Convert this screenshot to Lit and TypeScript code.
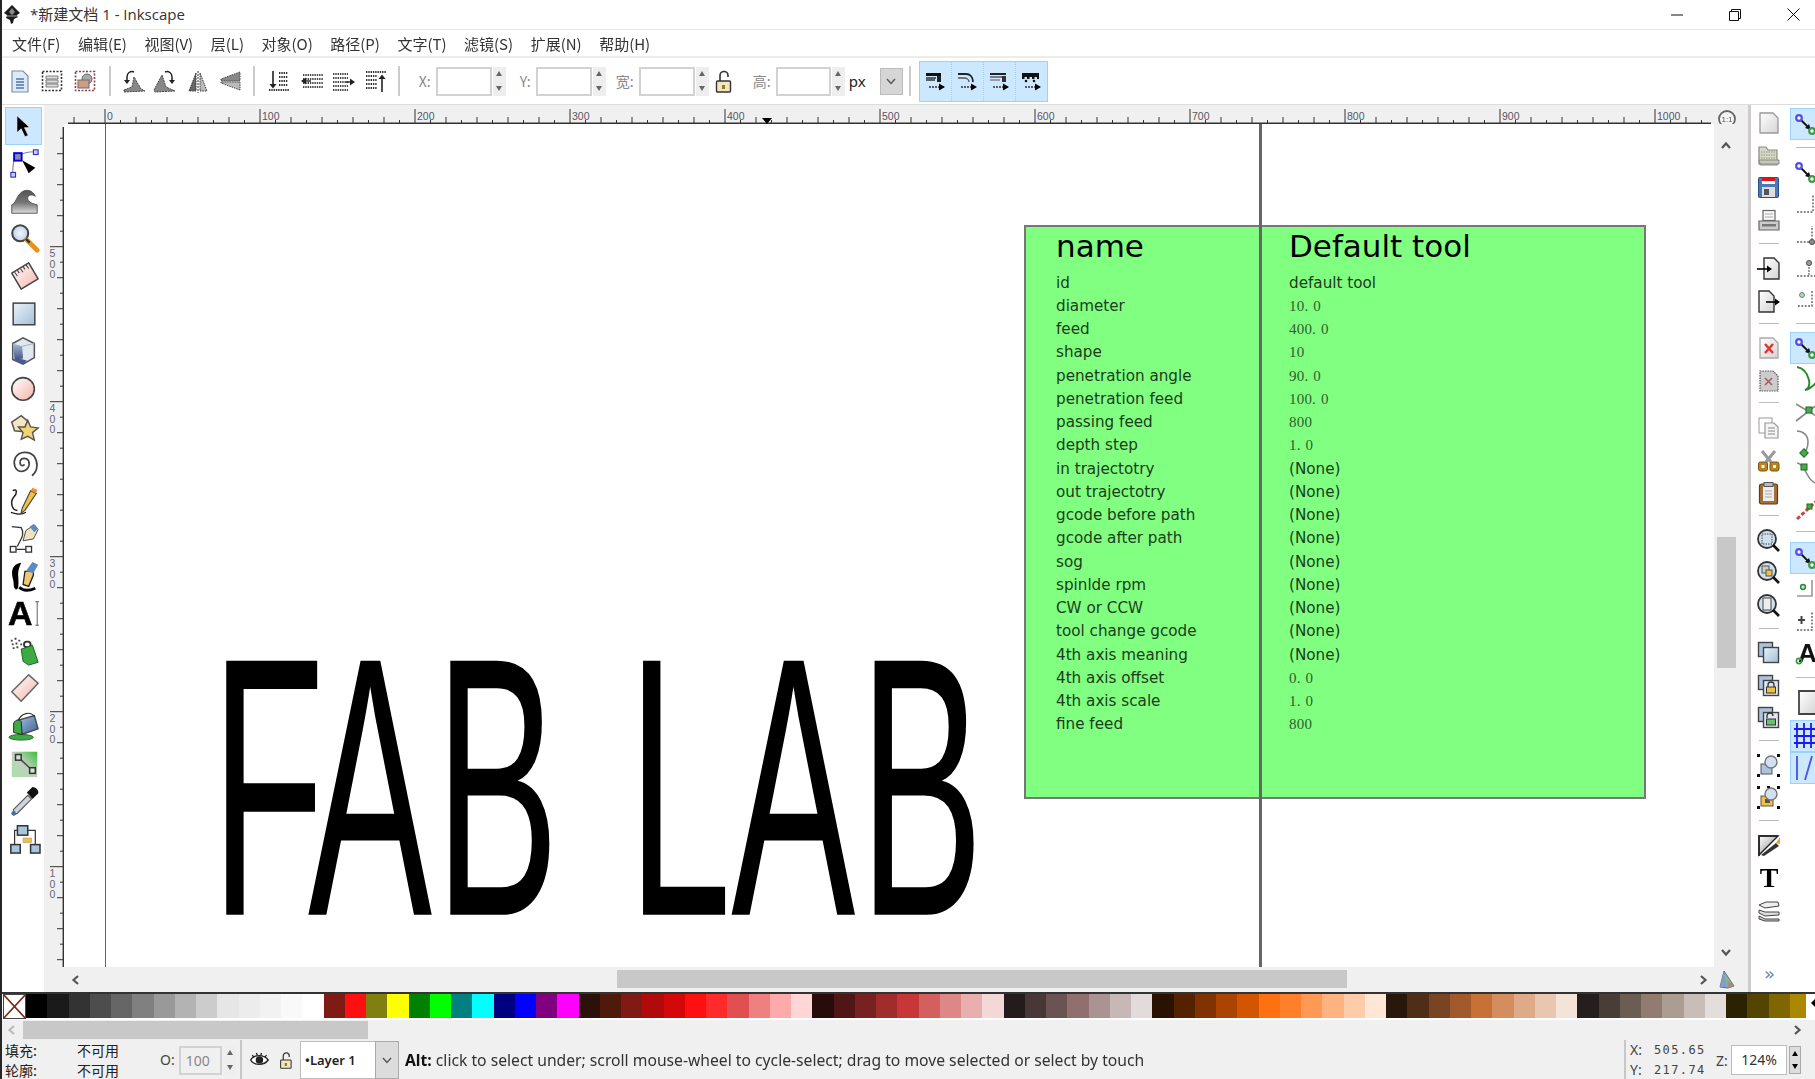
import { LitElement, html, css, svg } from "lit";
import { customElement } from "lit/decorators.js";

const chev = (d: string, c = "#555", sw = 2.2) => html`<svg class="chev" width="12" height="12" viewBox="0 0 12 12"><path d=${d} fill="none" stroke=${c} stroke-width=${sw}/></svg>`;
const CL = "M8 2L3.5 6L8 10", CR = "M4 2L8.5 6L4 10", CU = "M2 8L6 3.5L10 8", CD = "M2 4L6 8.5L10 4";

const dots = (x: number, y: number, w: number, c = "#333") => svg`<path d="M${x} ${y}h${w}" stroke=${c} stroke-width="2" stroke-dasharray="1.4 .9" fill="none"/>`;

const node = (x: number, y: number, c: string, s = 2.2) => svg`<circle cx=${x} cy=${y} r="2.8" fill="#fff" stroke=${c} stroke-width=${s}/>`;
const snapNode = svg`<path d="M10 11L19 20" stroke="#111" stroke-width="1.8"/><path d="M21 22l-6-2 4-4z" fill="#111"/>${node(9, 10, "#5050e8")}${node(22, 23, "#3d9a4a")}`;

const TOOLS: Record<string, any> = {
  select: svg`<path d="M9.5 6L9.5 24L14 20L18 28.5L21.5 27L17.5 18.8L23 18.5Z" fill="#000" stroke="#fff" stroke-width=".6"/>`,
  node: svg`<path d="M11 10C16 5 24 5 29 5M7 12C5 18 5 24 5 29" stroke="#888" stroke-width="1.2" fill="none"/><rect x="6.5" y="6.5" width="8" height="8" fill="#88a" stroke="#00d" stroke-width="2"/><rect x="27" y="3" width="5" height="5" fill="#cce" stroke="#33c" stroke-width="1.2"/><rect x="3" y="27" width="5" height="5" fill="#cce" stroke="#33c" stroke-width="1.2"/><path d="M15 14L29 22L22 28Z" fill="#000"/>`,
  tweak: svg`<path d="M4 30V21C8 20 9 12 14 8C19 4 26 5 29 12C25 9 20 11 21 15C22 19 27 20 31 21V30Z" fill="url(#gTweak)" stroke="#555" stroke-width="1"/>`,
  zoom: svg`<circle cx="13" cy="12" r="8.5" fill="url(#gBlue)" stroke="#444" stroke-width="2.2"/><path d="M20 19L31 30" stroke="#e8921c" stroke-width="5" stroke-linecap="round"/><path d="M19 18L23 22" stroke="#333" stroke-width="2.5"/>`,
  measure: svg`<path d="M4 14L22 3L32 20L14 31Z" fill="url(#gPink)" stroke="#444" stroke-width="1.6" stroke-linejoin="round"/><path d="M7 13l3 4M10 11l2 3M13 9l3 4M16 7l2 3M19 5l3 4" stroke="#444" stroke-width="1.2"/>`,
  rect: svg`<rect x="5.5" y="6.5" width="23" height="23" fill="url(#gRect)" stroke="#444" stroke-width="1.6"/>`,
  cube: svg`<path d="M5 9L16 3L28 9V24L16 31L5 26Z" fill="#dfe8f0" stroke="#555" stroke-width="1.6"/><path d="M5 9L15 12L16 25L7 26Z" fill="url(#gBlue2)"/><path d="M15 12L28 9" stroke="#aaa"/><path d="M8 24L20 27L16 31L6 27Z" fill="#4b5a90"/>`,
  circle: svg`<circle cx="16" cy="18" r="12" fill="url(#gPink)" stroke="#444" stroke-width="1.7"/>`,
  star: svg`<path d="M4 13L14 6L21 12L16 23L7 22Z" fill="#f4e6c0" stroke="#555" stroke-width="1.6"/><path d="M21 11L24 18L32 19L26 24L28 32L21 28L14 31L16 24L11 18L18 18Z" fill="#f0d670" stroke="#555" stroke-width="1.5"/>`,
  spiral: svg`<path d="M17 19C15 21 12 19 13 15C14 11 20 11 22 15C24 20 20 26 14 26C7 25 5 17 8 11C12 4 23 4 28 10C32 16 32 25 26 30" fill="none" stroke="#444" stroke-width="1.8" stroke-linecap="round"/>`,
  pencil: svg`<path d="M5 6C10 3 10 9 6 13C2 18 4 27 10 27" fill="none" stroke="#222" stroke-width="1.6"/><path d="M18 27L14 30L15 25L24 6L30 9Z" fill="#f0c24a" stroke="#444" stroke-width="1.2"/><path d="M24 6L26 3L31 5L30 9Z" fill="#e8903a"/><path d="M3 29C10 31 14 32 19 29" fill="none" stroke="#222" stroke-width="1.4"/>`,
  pen: svg`<rect x="2.5" y="26" width="6" height="6" fill="#fff" stroke="#333" stroke-width="1.4"/><rect x="19" y="26" width="6" height="6" fill="#fff" stroke="#333" stroke-width="1.4"/><path d="M9 29H19M4 5L14 6C19 14 12 20 10 26" fill="none" stroke="#333" stroke-width="1.4"/><path d="M16 20L19 9L28 3L32 8L27 18Z" fill="#f0e2c0" stroke="#444" stroke-width="1"/><path d="M23 5L27 2L32 7L28 11Z" fill="#5d88c8"/>`,
  callig: svg`<path d="M14 3C5 4 3 12 5 19C7 26 5 28 8 31C12 33 11 24 11 19C10 12 12 8 14 3Z" fill="#000"/><path d="M12 29C16 33 22 33 29 30" stroke="#000" stroke-width="3" fill="none"/><path d="M16 26L18 12L27 12L27 16L22 28Z" fill="#f0c870" stroke="#222" stroke-width="1.4"/><path d="M19 12L26 2L32 5L27 14Z" fill="#5d88c8"/>`,
  text: svg`<text x="0" y="30" font-family="Liberation Sans" font-weight="700" font-size="36" fill="#000" stroke="#000" stroke-width=".6">A</text><path d="M29 5h4M31 5V30M29 30h4" stroke="#555" stroke-width="1" fill="none"/>`,
  spray: svg`<path d="M3 6h2M7 4h2M4 10h2M8 9h2M11 6h2M13 10h2M5 14h2M9 13h2" stroke="#444" stroke-width="2"/><rect x="17" y="7" width="7" height="6" rx="3" fill="none" stroke="#333" stroke-width="2"/><path d="M14 15L26 11L32 29L22 32L16 28Z" fill="#3eab42" stroke="#1c5c1f" stroke-width="1"/>`,
  eraser: svg`<path d="M4 21L22 3L32 12L14 31Z" fill="url(#gPink)" stroke="#666" stroke-width="1.6" stroke-linejoin="round"/>`,
  bucket: svg`<ellipse cx="14" cy="29" rx="13" ry="3" fill="#3eab42" stroke="#1d6a22"/><path d="M10 11L28 6L32 20L15 26Z" fill="url(#gBlue3)" stroke="#444" stroke-width="1.4"/><path d="M6 24V14C8 10 12 10 14 12L15 26Z" fill="#3eab42" stroke="#222"/><path d="M11 11C14 3 24 1 28 7" fill="none" stroke="#333" stroke-width="1.3"/>`,
  gradient: svg`<rect x="4" y="5" width="27" height="27" fill="url(#gGreen)"/><path d="M11 11L26 25" stroke="#444" stroke-width="1.6"/><rect x="8" y="8" width="6" height="6" fill="#ddd" stroke="#333" stroke-width="1.6"/><rect x="23" y="22" width="6" height="6" fill="#ddd" stroke="#333" stroke-width="1.6"/>`,
  dropper: svg`<path d="M6 26L21 11L25 15L10 30L6 32Z" fill="#cbd5e0" stroke="#555" stroke-width="1.2"/><path d="M20 8L26 2C30 2 33 6 32 9L26 15Z" fill="#111"/><circle cx="6" cy="30" r="2.4" fill="#4a6da0"/>`,
  conn: svg`<rect x="10" y="4" width="11" height="10" fill="#a9c4de" stroke="#333" stroke-width="1.6"/><rect x="3" y="24" width="10" height="9" fill="#a9c4de" stroke="#333" stroke-width="1.6"/><rect x="24" y="24" width="10" height="9" fill="#a9c4de" stroke="#333" stroke-width="1.6"/><rect x="16" y="17" width="9" height="5" fill="#f0c040" stroke="#999" stroke-width=".6"/><path d="M10 9H7V24M21 9H29V24" fill="none" stroke="#333" stroke-width="1.3"/>`,
};

const TB: Record<string, any> = {
  doc: svg`<path d="M4 2h11l5 5v16H4z" fill="#dfeaf5" stroke="#7d90a8" stroke-width="1.2"/><path d="M8 10h8M8 13h8M8 16h8M8 19h8" stroke="#4a78b0" stroke-width="1.5"/>`,
  selAll: svg`<rect x="2.5" y="2.5" width="19" height="19" fill="none" stroke="#333" stroke-width="1.6" stroke-dasharray="2 1.5"/><path d="M6 7h12v3H6zM6 11h12v3H6zM6 15h12v3H6z" fill="#ddd" stroke="#666" stroke-width=".8"/>`,
  selLay: svg`<rect x="2.5" y="2.5" width="19" height="19" fill="none" stroke="#844" stroke-width="1.6" stroke-dasharray="2 1.5"/><circle cx="14" cy="10" r="5" fill="#aaa" stroke="#666"/><rect x="5" y="11" width="11" height="8" fill="#c9a087" stroke="#766"/>`,
  rotL: svg`<path d="M3 21L11 18L13 8L20 20L24 22L3 23Z" fill="#888" stroke="#444" stroke-dasharray="2 .8"/><path d="M13 3A5 5 0 0 0 6 8V13" fill="none" stroke="#222" stroke-width="1.5"/><path d="M3 11h6l-3 4z" fill="#222"/>`,
  rotR: svg`<path d="M1 21L9 6L13 18L22 22L2 23Z" fill="#888" stroke="#444" stroke-dasharray="2 .8"/><path d="M12 3A5 5 0 0 1 19 8V13" fill="none" stroke="#222" stroke-width="1.5"/><path d="M16 11h6l-3 4z" fill="#222"/>`,
  flipH: svg`<path d="M10 4L3 22H10Z" fill="#666" stroke="#333" stroke-dasharray="1.5 1"/><path d="M14 4L21 22H14Z" fill="#bbb" stroke="#333" stroke-dasharray="1.5 1"/><path d="M12 2V24" stroke="#333" stroke-dasharray="2 1"/>`,
  flipV: svg`<path d="M22 3L3 10V12H22Z" fill="#888" stroke="#444" stroke-dasharray="1.5 1"/><path d="M22 21L3 14V13H22Z" fill="#bbb" stroke="#444" stroke-dasharray="1.5 1"/>`,
  top: svg`${[4, 8, 12, 16].map((y) => dots(12, y, 9))}${dots(2, 21, 20)}<path d="M6 2V17" stroke="#222" stroke-width="1.6"/><path d="M2.5 15h7l-3.5 4.5z" fill="#222"/>`,
  up: svg`${[6, 10, 14, 18].map((y) => dots(3, y, 20, "#444"))}<path d="M2 12h9" stroke="#222" stroke-width="1.4"/><path d="M1 12l5-3.5v7z" fill="#222"/>`,
  down: svg`${[5, 9, 13, 17, 21].map((y) => dots(1, y, 15, "#444"))}<path d="M14 13h8" stroke="#222" stroke-width="1.4"/><path d="M23 13l-5-3.5v7z" fill="#222"/>`,
  bot: svg`${dots(2, 3, 20)}${[7, 11, 15, 19].map((y) => dots(2, y, 11))}<path d="M18 8V23" stroke="#222" stroke-width="1.6"/><path d="M14.5 10h7L18 5.5z" fill="#222"/>`,
  s1: svg`<path d="M3 4h15v3H3z" fill="#111"/><path d="M3 9h10M3 11h9" stroke="#333" stroke-width="1.4"/><path d="M14 7h4v6h-4z" fill="#222"/><path d="M6 18h11" stroke="#333" stroke-width="1.5" stroke-dasharray="2 1"/><path d="M22 18l-6-3.5v7z" fill="#000"/>`,
  s2: svg`<path d="M3 5H11C15 5 18 8 18 13" fill="none" stroke="#222" stroke-width="1.8"/><path d="M3 9H9C12 9 14 11 14 13" fill="none" stroke="#555" stroke-width="1.4"/><path d="M6 18h11" stroke="#333" stroke-width="1.5" stroke-dasharray="2 1"/><path d="M22 18l-6-3.5v7z" fill="#000"/>`,
  s3: svg`<path d="M3 4h16v2H3z" fill="#222"/><path d="M3 7h12v2H3z" fill="#778"/><path d="M3 10h10v2H3z" fill="#99a"/><path d="M15 7h4v6h-4z" fill="#333"/><path d="M6 18h11" stroke="#333" stroke-width="1.5" stroke-dasharray="2 1"/><path d="M22 18l-6-3.5v7z" fill="#000"/>`,
  s4: svg`<path d="M3 4h17v4H3z" fill="#111"/><path d="M3 9h17" stroke="#111" stroke-width="2" stroke-dasharray="2.5 2.5"/><circle cx="7" cy="12" r="1.3" fill="#111"/><circle cx="15" cy="12" r="1.3" fill="#111"/><path d="M6 18h11" stroke="#333" stroke-width="1.5" stroke-dasharray="2 1"/><path d="M22 18l-6-3.5v7z" fill="#000"/>`,
  lock: svg`<path d="M7 13V6.5a4 4 0 0 1 8 0V8" fill="none" stroke="#333" stroke-width="1.6"/><rect x="3.5" y="12" width="14" height="11" rx="1" fill="#f2e6c0" stroke="#333" stroke-width="1.4"/><rect x="9" y="16" width="3" height="4" fill="#9a7a20"/>`,
  eye: svg`<path d="M2 12C6 5 18 5 23 12C18 19 6 19 2 12Z" fill="#fff" stroke="#222" stroke-width="1.6"/><circle cx="12.5" cy="12" r="4.5" fill="#222"/><path d="M4 6l2 3M9 3.5l1 3M15 3.5l-1 3M21 6l-2 3" stroke="#222" stroke-width="1.6"/>`,
};

const CMD: Record<string, any> = {
  new: svg`<path d="M3 2h13l5 5v15H3z" fill="url(#gPage)" stroke="#999" stroke-width="1.3" stroke-linejoin="round"/>`,
  open: svg`<path d="M2 20V3h7l2 3h9v15H4z" fill="#d8d8c8" stroke="#888" stroke-width="1.2"/><path d="M4 8h16M4 11h16M4 14h16" stroke="#a8b090" stroke-width="1.5" stroke-dasharray="1.5 1"/><path d="M2 16H22V20H3Z" fill="#c8c8b8" stroke="#888"/>`,
  save: svg`<rect x="1.5" y="1.5" width="20" height="20" rx="1" fill="#4a78b8" stroke="#2b4f88"/><rect x="5" y="2" width="13" height="6" fill="#fff"/><rect x="5" y="2" width="13" height="3" fill="#d81818"/><rect x="5" y="11" width="13" height="10" fill="#ddd"/><rect x="7" y="13" width="5" height="6" fill="#555"/>`,
  print: svg`<rect x="6" y="1.5" width="12" height="10" fill="#f8f8f8" stroke="#666" stroke-width="1.2"/><path d="M8 5h8M8 8h8" stroke="#aaa"/><path d="M2 12H22V21H2Z" fill="#ccc" stroke="#666" stroke-width="1.2"/><rect x="5" y="15" width="14" height="2.5" fill="#777"/>`,
  imp: svg`<path d="M7 2h10l5 5v16H7z" fill="url(#gPage)" stroke="#333" stroke-width="1.4"/><path d="M0 13H13" stroke="#000" stroke-width="1.6"/><path d="M15 13l-5-3.5v7z" fill="#000"/>`,
  exp: svg`<path d="M2 2h10l5 5v16H2z" fill="url(#gPage)" stroke="#333" stroke-width="1.4"/><path d="M9 13H19" stroke="#000" stroke-width="1.6"/><path d="M23 13l-5-3.5v7z" fill="#000"/>`,
  rev: svg`<path d="M3 2h13l5 5v15H3z" fill="url(#gPage)" stroke="#aaa" stroke-width="1.3"/><path d="M8 8L16 17M16 8L8 17" stroke="#e83030" stroke-width="2.4"/>`,
  close: svg`<path d="M3 2h13l5 5v15H3z" fill="#ccc" stroke="#555" stroke-width="1.2" stroke-dasharray="1.5 1"/><path d="M8 9L15 16M15 9L8 16" stroke="#a06060" stroke-width="1.6"/>`,
  copy: svg`<rect x="2" y="2" width="13" height="15" fill="#fff" stroke="#aaa" stroke-width="1.2"/><path d="M8 7H17L21 11V22H8Z" fill="#f4f4f4" stroke="#999" stroke-width="1.2"/><path d="M11 12h7M11 15h7M11 18h7" stroke="#888"/>`,
  cut: svg`<path d="M5 2L14 13M18 2L9 13" stroke="#999" stroke-width="3"/><rect x="1.5" y="13" width="9" height="9" rx="2" fill="#b88420" stroke="#7a5510"/><rect x="13" y="13" width="9" height="9" rx="2" fill="#b88420" stroke="#7a5510"/><rect x="4.5" y="16" width="3" height="3" fill="#eee"/><rect x="16" y="16" width="3" height="3" fill="#eee"/>`,
  paste: svg`<rect x="2.5" y="3" width="18" height="20" rx="2" fill="#a56f3a" stroke="#5c3b17" stroke-width="1.2"/><rect x="6" y="5" width="11" height="15" fill="#eee"/><rect x="7" y="1.5" width="9" height="4" fill="#bbb" stroke="#555"/><path d="M8 10h7M8 13h7M8 16h7" stroke="#aaa"/>`,
  zoomS: svg`<circle cx="10" cy="10" r="9" fill="#cfe0ee" stroke="#333" stroke-width="1.8"/><rect x="5" y="5" width="10" height="10" fill="none" stroke="#444" stroke-dasharray="1.5 1"/><path d="M16 16L22 22" stroke="#111" stroke-width="2.6"/>`,
  zoomD: svg`<circle cx="10" cy="10" r="9" fill="#cfe0ee" stroke="#333" stroke-width="1.8"/><rect x="5" y="5" width="7" height="7" fill="#ccc" stroke="#555"/><rect x="9" y="9" width="6" height="6" fill="#f0c040" stroke="#555"/><path d="M16 16L22 22" stroke="#111" stroke-width="2.6"/>`,
  zoomP: svg`<circle cx="10" cy="10" r="9" fill="#cfe0ee" stroke="#333" stroke-width="1.8"/><rect x="6" y="4" width="8" height="12" fill="#eee" stroke="#444"/><path d="M16 16L22 22" stroke="#111" stroke-width="2.6"/>`,
  dup: svg`<rect x="1.5" y="1.5" width="14" height="14" fill="#a9c4de" stroke="#444" stroke-width="1.4"/><rect x="6.5" y="6.5" width="15" height="15" fill="url(#gRect)" stroke="#444" stroke-width="1.4"/>`,
  clone: svg`<rect x="1.5" y="1.5" width="14" height="14" fill="#a9c4de" stroke="#444" stroke-width="1.4"/><rect x="6.5" y="6.5" width="15" height="15" fill="#dfe8f0" stroke="#444" stroke-width="1.4"/><path d="M11 13V11a3 3 0 0 1 6 0v2" fill="none" stroke="#333" stroke-width="1.3"/><rect x="9.5" y="13" width="9" height="6" fill="#f0c040" stroke="#333"/>`,
  unlink: svg`<rect x="1.5" y="1.5" width="14" height="14" fill="#a9c4de" stroke="#444" stroke-width="1.4"/><rect x="6.5" y="6.5" width="15" height="15" fill="#dfe8f0" stroke="#444" stroke-width="1.4"/><path d="M10 12V10a3 3 0 0 1 6 0" fill="none" stroke="#333" stroke-width="1.3"/><rect x="9.5" y="13" width="9" height="6" fill="#6cc070" stroke="#333"/>`,
  group: svg`<rect x="4" y="10" width="11" height="10" fill="#a9c4de" stroke="#555"/><circle cx="14" cy="8" r="6" fill="#cfe0ee" stroke="#777" stroke-width="1.4"/><path d="M0 0h3v3H0zM20 0h3v3H20zM0 20h3v3H0zM20 20h3v3H20z" fill="#111"/>`,
  ungroup: svg`<rect x="4" y="10" width="12" height="10" fill="#f0c040" stroke="#555"/><rect x="8" y="13" width="5" height="4" fill="#555"/><circle cx="14" cy="8" r="6" fill="#cfe0ee" stroke="#777" stroke-width="1.4"/><path d="M0 0h3v3H0zM20 0h3v3H20zM0 20h3v3H0zM20 20h3v3H20zM10 0h3v2h-3z" fill="#111"/>`,
  xml: svg`<path d="M2 2H21L2 21Z" fill="url(#gXml)" stroke="#222" stroke-width="1.4"/><path d="M2 22V2H21" fill="none" stroke="#222" stroke-width="1.6"/><path d="M4 21L19 9L22 12L7 22Z" fill="#333"/><path d="M19 9L23 3L23 10Z" fill="#e8a020"/>`,
  text: svg`<text x="12" y="21" text-anchor="middle" font-family="Liberation Serif" font-weight="700" font-size="28" fill="#000">T</text>`,
  layers: svg`<path d="M2 6L9 3H21L22 7L8 9Z" fill="#eee" stroke="#444"/><path d="M2 11L8 13H22V16L8 17L2 14Z" fill="#ddd" stroke="#444"/><path d="M2 17L8 20H22V22H8L2 20Z" fill="#ccc" stroke="#444"/>`,
};

const dashCorner = (d: string, extra: any = "") => svg`<path d=${d} fill="none" stroke="#555" stroke-width="1.4" stroke-dasharray="1.8 1.6"/>${extra}`;
const SNAP: Record<string, any> = {
  main: snapNode,
  conn: snapNode,
  bbox: dashCorner("M7 24H23V6"),
  edge: dashCorner("M7 22H22V6", svg`<circle cx="22" cy="22" r="2.6" fill="#888" stroke="#555"/>`),
  edgeMid: dashCorner("M7 24H25", svg`<path d="M19 12V24" stroke="#777" stroke-width="1.4" stroke-dasharray="2 1"/><circle cx="19" cy="11" r="2.6" fill="#999" stroke="#555"/>`),
  center: dashCorner("M8 22H22V6", svg`<circle cx="12" cy="11" r="2.4" fill="#ccd" stroke="#4a8a4a"/>`),
  path: svg`<path d="M7 3C13 4 17 8 19 16C20 22 18 25 15 26C20 25 24 22 30 14" fill="none" stroke="#2a8a2a" stroke-width="1.9"/>`,
  inter: svg`<path d="M6 25L33 4M6 8L33 24" stroke="#888" stroke-width="1.6"/><rect x="16" y="11" width="6" height="6" fill="#4aaa4a" stroke="#1a6a1a"/>`,
  cusp: svg`<path d="M7 3C13 3 18 7 18 14C18 20 16 24 12 27" fill="none" stroke="#888" stroke-width="1.6"/><rect x="11" y="22" width="6" height="6" transform="rotate(45 14 25)" fill="#4aaa4a" stroke="#1a6a1a"/>`,
  smooth: svg`<path d="M7 3C11 3 14 8 17 14C20 20 24 25 32 24" fill="none" stroke="#888" stroke-width="1.6"/><rect x="11" y="4" width="6" height="6" fill="#4aaa4a" stroke="#1a6a1a"/>`,
  mid: svg`<path d="M7 27L32 4" stroke="#d84040" stroke-width="3" stroke-dasharray="4 2"/><rect x="17" y="12" width="5" height="5" fill="#4aaa4a" stroke="#1a6a1a"/>`,
  oth: snapNode,
  rot: svg`<path d="M7 22H22V6" fill="none" stroke="#999" stroke-width="1.6"/><circle cx="13" cy="13" r="2.4" fill="#cde" stroke="#2a8a2a" stroke-width="1.5"/>`,
  cross: svg`<path d="M8 14H15M11.5 10V18" stroke="#444" stroke-width="2"/><path d="M7 24H22V6" fill="none" stroke="#555" stroke-width="1.4" stroke-dasharray="1.8 1.6"/>`,
  txt: svg`<text x="8" y="24" font-family="Liberation Sans" font-weight="700" font-size="26" fill="#111">A</text><circle cx="9" cy="23" r="2.6" fill="none" stroke="#3a9a3a" stroke-width="1.6"/>`,
  page: svg`<path d="M9 3H26V26H9Z" fill="url(#gPage)" stroke="#444" stroke-width="1.8"/>`,
  grid: svg`<path d="M7 3V28M14 3V28M21 3V28M28 3V28M4 9H32M4 16H32M4 23H32" stroke="#1a1aee" stroke-width="1.8"/>`,
  guide: svg`<path d="M7 4V28M15 28L22 4M30 4V28" stroke="#4a5ae8" stroke-width="1.9"/>`,
};

const SWATCHES = ["#000000","#1a1a1a","#333333","#4d4d4d","#666666","#808080","#999999","#b3b3b3","#cccccc","#e6e6e6","#ececec","#f2f2f2","#f9f9f9","#ffffff","#801a14","#ff1010","#808010","#ffff00","#008000","#00ff00","#008080","#00ffff","#000080","#0000ff","#800080","#ff00ff","#2b1108","#501a0a","#801a14","#b00a0a","#d40808","#ff1010","#ff2a2a","#e05050","#f08080","#ffaaaa","#ffd5d5","#280b0b","#501616","#782121","#a02c2c","#c83737","#d35f5f","#de8787","#e9afaf","#f4d7d7","#241c1c","#483737","#6c5353","#916f6f","#ac9393","#c8b7b7","#e3dbdb","#2b1100","#552200","#803300","#aa4400","#d45500","#ff7010","#ff7f2a","#ff9955","#ffb380","#ffccaa","#ffe6d5","#28170b","#502d16","#784421","#a05a2c","#c87137","#d38d5f","#deaa87","#e9c6af","#f4e3d7","#241f1c","#483e37","#6c5d53","#917c6f","#ac9d93","#c8beb7","#e3dedb","#2b2200","#554400","#806600","#aa8800"];

const ROWS: [string, string, boolean][] = [
  ["id", "default tool", false],["diameter", "10. 0", true],["feed", "400. 0", true],["shape", "10", true],["penetration angle", "90. 0", true],["penetration feed", "100. 0", true],["passing feed", "800", true],["depth step", "1. 0", true],["in trajectotry", "(None)", false],["out trajectotry", "(None)", false],["gcode before path", "(None)", false],["gcode after path", "(None)", false],["sog", "(None)", false],["spinlde rpm", "(None)", false],["CW or CCW", "(None)", false],["tool change gcode", "(None)", false],["4th axis meaning", "(None)", false],["4th axis offset", "0. 0", true],["4th axis scale", "1. 0", true],["fine feed", "800", true],
];

@customElement("app-root")
export class AppRoot extends LitElement {
  static styles = css`
    :host { display: block; width: 1815px; height: 1079px; overflow: hidden; position: relative; background: #fff; font-family: "Noto Sans", "Noto Sans CJK SC", sans-serif; color: #222; }
    .stripe { position: absolute; left: 0; top: 0; width: 2px; height: 1079px; background: #262626; z-index: 5; }
    .title { height: 29px; border-bottom: 1px solid #e6e6e6; display: flex; align-items: center; padding-left: 3px; font-size: 15px; }
    .title .logo { width: 18px; height: 20px; margin-right: 9px; }
    .title .t { flex: 1; color: #333; font-family: "Open Sans", "Noto Sans CJK SC", sans-serif; margin-top: -2px; }
    .wc { display: flex; }
    .wc div { width: 58px; height: 29px; display: flex; align-items: center; justify-content: center; }
    .menu { height: 26px; display: flex; align-items: center; padding-left: 12px; gap: 17.5px; border-bottom: 2px solid #ececec; font-size: 15px; color: #333; font-family: "Noto Sans CJK SC", sans-serif; filter: blur(.25px); }
    .menu span { white-space: nowrap; }
    .toolbar { height: 46px; border-bottom: 1px solid #ddd; display: flex; align-items: center; padding-left: 4px; font-size: 13px; color: #888; }
    .tb { width: 32.3px; height: 46px; display: flex; align-items: center; justify-content: center; flex: none; }
    .tb svg, .ico svg { filter: blur(.35px); overflow: visible; display: block; }
    .sep { width: 2px; height: 30px; background: #ccc; flex: none; }
    .lbl { flex: none; text-align: right; padding-right: 5px; box-sizing: border-box; color: #888; font-family: "Noto Sans CJK SC", sans-serif; font-size: 14px; }
    .inp { flex: none; width: 56px; height: 29px; box-sizing: border-box; border: 2px solid #d2d2d2; background: #fff; }
    .spin { flex: none; width: 13px; height: 29px; background: #eee; display: flex; flex-direction: column; align-items: center; justify-content: space-around; margin-left: 1px; }
    .up { width: 0; height: 0; border: 3.5px solid transparent; border-top: 0; border-bottom: 5px solid #666; }
    .dn { width: 0; height: 0; border: 3.5px solid transparent; border-bottom: 0; border-top: 5px solid #666; }
    .px { flex: none; width: 34px; height: 27px; background: #fff; color: #222; font-size: 15px; padding-left: 3px; box-sizing: border-box; line-height: 26px; margin-left: 1px; }
    .drop { flex: none; width: 23px; height: 27px; background: #d6d6d6; border: 1px solid #bbb; box-sizing: border-box; display: flex; align-items: center; justify-content: center; }
    .group { display: flex; flex: none; height: 41px; background: #cce8ff; border: 1px solid #99d1ff; box-sizing: border-box; width: 129px; }
    .group div { flex: 1; display: flex; align-items: center; justify-content: center; border-right: 1px dotted #99d1ff; }
    .group div:last-child { border-right: 0; }
    .main { display: flex; height: 887px; }
    .tools { width: 44px; flex: none; display: flex; flex-direction: column; padding-top: 2px; box-sizing: border-box; background: #fff; align-items: center; }
    .tool { flex: none; width: 37px; height: 37.5px; display: flex; align-items: center; justify-content: center; box-sizing: border-box; margin-left: 3px; }
    .tool.on { background: #cce8ff; border: 1px solid #99d1ff; }
    .center { flex: 1; display: grid; grid-template-columns: 20px 1647px 37px; grid-template-rows: 19px 843px 25px; background: #f0f0f0; min-width: 0; }
    .rt, .rl { display: block; overflow: hidden; }
    .rt { grid-column: 1 / 3; grid-row: 1; }
    .rl { grid-column: 1; grid-row: 2; }
    .corner11 { grid-column: 3; grid-row: 1; display: flex; justify-content: center; align-items: flex-start; padding: 4px 1px 0 0; box-sizing: border-box; height: 19px; }
    .canvas { grid-column: 2; grid-row: 2; background: #fff; position: relative; }
    .pagel { position: absolute; left: 41px; top: 0; bottom: 0; width: 1px; background: #666; }
    .guide { position: absolute; left: 1195px; top: 0; bottom: 0; width: 3px; background: #666; z-index: 2; }
    .fab { position: absolute; left: 147px; top: 497px; display: flex; font-family: "Liberation Sans", sans-serif; font-size: 186px; line-height: .9; color: #000; transform: scaleY(1.985); transform-origin: left top; white-space: pre; font-kerning: none; }
    .fab span { display: block; height: 167px; }
    .fab .k0 { width: 97px; }
    .k2 { margin-left: 3px; }
    .k3 { margin-left: 17px; }
    .k4 { margin-left: 4px; }
    .sheet { position: absolute; left: 960px; top: 101px; width: 622px; height: 574px; box-sizing: border-box; background: #80ff80; border: 2px solid #777; padding-left: 30px; font-family: "DejaVu Sans", sans-serif; color: #111; display: grid; grid-template-columns: 233px 1fr; grid-template-rows: 44.5px; grid-auto-rows: 23.25px; align-content: start; z-index: 1; }
    .sheet .glive { position: absolute; left: 233px; top: -2px; bottom: -2px; width: 3px; background: #31a831; z-index: 3; }
    .hd { font-size: 31px; line-height: 31px; padding-top: 3.5px; color: #000; white-space: nowrap; }
    .cell { font-size: 15.2px; line-height: 23.25px; color: #1c3c1c; white-space: pre; }
    .num { font-family: "Liberation Serif", serif; font-size: 15px; color: #2f5f2f; word-spacing: 1px; letter-spacing: .2px; }
    .vs { grid-column: 3; grid-row: 2; display: flex; flex-direction: column; align-items: center; position: relative; border-left: 3px solid #fff; box-sizing: border-box; background: #f0f0f0; width: 37px; }
    .vthumb { position: absolute; left: 3px; top: 413px; width: 19px; height: 131px; background: #c8c8c8; }
    .vs .a { margin-top: 11px; margin-left: -10px; }
    .vs .b { margin-top: auto; margin-bottom: 4px; margin-left: -10px; }
    .hs { grid-column: 1 / 3; grid-row: 3; display: flex; align-items: center; position: relative; }
    .hthumb { position: absolute; left: 573px; top: 3px; width: 730px; height: 18px; background: #c8c8c8; }
    .hs .a { margin-left: 26px; }
    .hs .b { margin-left: auto; margin-right: 2px; }
    .cms { grid-column: 3; grid-row: 3; display: flex; align-items: center; padding-left: 7px; box-sizing: border-box; }
    .right { width: 67px; flex: none; border-left: 3px solid #d0cccc; box-sizing: border-box; display: flex; background: #fff; position: relative; overflow: hidden; }
    .cmd { width: 35px; flex: none; display: flex; flex-direction: column; align-items: center; padding-top: 1.7px; box-sizing: border-box; }
    .c { height: 32.6px; flex: none; display: flex; align-items: center; justify-content: center; }
    .csep { width: 20px; height: 1px; background: #bbb; flex: none; margin: 5.5px 0 8.27px; }
    .more { position: absolute; left: 13px; top: 860px; color: #6a86b8; font-size: 18px; line-height: 18px; font-family: "DejaVu Sans", sans-serif; }
    .snap { width: 32px; flex: none; display: flex; flex-direction: column; padding-top: 3px; overflow: hidden; margin-left: 4px; }
    .s { height: 32px; width: 32px; flex: none; display: flex; align-items: center; box-sizing: border-box; }
    .s.on { background: #cce8ff; border: 1px solid #99d1ff; border-right: 0; }
    .s.on svg { margin-left: -1px; }
    .ssep { height: 1px; width: 22px; margin: 7px 0 8px 6px; background: #bbb; flex: none; }
    .ssep.w { margin-bottom: 10px; }
    .palette { height: 28px; border-top: 2px solid #333; display: flex; background: #fff; box-sizing: border-box; position: relative; }
    .x { width: 23px; height: 25px; margin-left: 3px; flex: none; }
    .sw { flex: none; display: flex; width: 1779.5px; height: 24px; overflow: hidden; }
    .sw i { display: block; width: 21.25px; height: 24px; flex: none; }
    .pm { position: absolute; right: 0; top: 5px; width: 0; height: 0; border: 4px solid transparent; border-left: 0; border-right: 4px solid #000; }
    .pscroll { height: 20px; background: #f0f0f0; display: flex; align-items: center; position: relative; padding: 0 12px 0 6px; justify-content: space-between; }
    .pthumb { position: absolute; left: 23px; top: 1px; width: 345px; height: 18px; background: #c8c8c8; }
    .status { height: 40px; background: #f0f0f0; display: flex; align-items: center; font-size: 14px; color: #222; padding: 0 14px 0 5px; box-sizing: border-box; }
    .fs { width: 235px; flex: none; display: grid; grid-template-columns: 72px 60px 1fr; grid-template-rows: 20px 20px; font-family: "Noto Sans CJK SC", sans-serif; font-size: 14px; line-height: 20px; }
    .o { grid-column: 3; grid-row: 1 / 3; display: flex; align-items: center; color: #666; font-size: 14px; font-family: "Noto Sans", sans-serif; }
    .o b { font-weight: 400; margin-right: 4px; color: #444; margin-left: 23px; }
    .oi { width: 43px; height: 29px; border: 2px solid #d2d2d2; box-sizing: border-box; line-height: 25px; padding-left: 5px; color: #888; flex: none; }
    .status .spin { height: 29px; margin-left: 2px; width: 12px; }
    .vsep { width: 2px; height: 40px; background: #c8c8c8; flex: none; }
    .ly { flex: none; width: 75px; height: 38px; background: #fff; box-sizing: border-box; border: 1px solid #bbb; border-right: 0; line-height: 36px; padding-left: 4px; font-size: 13px; font-weight: 600; font-family: "Noto Sans", sans-serif; color: #222; }
    .ld { flex: none; width: 24px; height: 38px; background: #dcdcdc; border: 1px solid #aaa; box-sizing: border-box; display: flex; align-items: center; justify-content: center; }
    .msg { flex: 1; padding-left: 6px; white-space: nowrap; color: #333; font-family: "Noto Sans", sans-serif; font-size: 15.7px; min-width: 0; filter: blur(.2px); }
    .msg b { font-weight: 700; color: #111; }
    .coords { width: 90px; flex: none; display: grid; grid-template-columns: 24px 1fr; grid-template-rows: 20px 20px; padding-left: 4px; box-sizing: border-box; line-height: 20px; color: #444; }
    .coords span:nth-child(even) { font-family: "DejaVu Sans Mono", monospace; font-size: 12px; letter-spacing: 1.4px; }
    .coords span:nth-child(odd) { font-size: 14px; }
    .z { flex: none; font-size: 14px; width: 15px; color: #444; }
    .zi { flex: none; width: 56px; height: 30px; box-sizing: border-box; border: 1px solid #bbb; background: #fff; line-height: 28px; text-align: center; font-size: 14px; color: #333; }
    .zs { flex: none; width: 12px; height: 28px; margin-left: 2px; background: #ddd; border: 1px solid #aaa; box-sizing: border-box; display: flex; flex-direction: column; align-items: center; justify-content: space-around; }
    .zs .up { border-bottom-color: #000; }
    .zs .dn { border-top-color: #000; }
  `;

  private ic(frag: any, size = 24, vb = 24) {
    return html`<svg width=${size} height=${size} viewBox="0 0 ${vb} ${vb}">${frag}</svg>`;
  }

  private topRuler() {
    const origin = 44;
    const lines: any[] = [];
    for (let k = -2; k < 110; k++) {
      const x = 105 + k * 15.5 - origin;
      if (x < 24 || x > 1711 - origin) continue;
      const major = k % 10 === 0;
      const tall = ((k % 2) + 2) % 2 === 0;
      const y1 = major ? 4 : tall ? 12 : 15;
      lines.push(svg`<path d="M${x} ${y1}V19" stroke="#333" stroke-width="1"/>`);
      if (major && k >= 0) lines.push(svg`<text x=${x + 2} y="15" font-size="10.5" font-family="Liberation Sans" fill="#556">${k * 10}</text>`);
    }
    return svg`<svg class="rt" width="1667" height="19" viewBox="0 0 1667 19"><path d="M24 18.3H1667" stroke="#333" stroke-width="1.4"/>${lines}<path d="M718 13h10l-5 6z" fill="#000"/></svg>`;
  }

  private leftRuler() {
    const out: any[] = [];
    for (let k = -8; k < 48; k++) {
      const y = 246.7 + k * 15.5 - 124;
      if (y < 3 || y > 843) continue;
      const major = k % 10 === 0;
      const tall = ((k % 2) + 2) % 2 === 0;
      const x1 = major ? 6 : tall ? 13 : 16;
      out.push(svg`<path d="M${x1} ${y}H20" stroke="#333" stroke-width="1"/>`);
      if (major) {
        const v = String(500 - k * 10);
        [...v].forEach((ch, i) => out.push(svg`<text x="5.5" y=${y + 10.5 + i * 10.4} font-size="10.5" font-family="Liberation Sans" fill="#667">${ch}</text>`));
      }
    }
    return svg`<svg class="rl" width="20" height="843" viewBox="0 0 20 843"><path d="M19.3 3V843" stroke="#333" stroke-width="1.4"/>${out}</svg>`;
  }

  render() {
    const tb = (n: string) => html`<div class="tb ico">${this.ic(TB[n])}</div>`;
    const spin = html`<div class="spin"><i class="up"></i><i class="dn"></i></div>`;
    const tools = ["select","node","tweak","zoom","measure","rect","cube","circle","star","spiral","pencil","pen","callig","text","spray","eraser","bucket","gradient","dropper","conn"];
    const cmds = ["new","open","save","print","|","imp","exp","|","rev","close","|","copy","cut","paste","|","zoomS","zoomD","zoomP","|","dup","clone","unlink","|","group","ungroup","|","xml","text","layers"];
    const snaps: [string, boolean][] = [["main",true],["|",false],["conn",false],["bbox",false],["edge",false],["edgeMid",false],["center",false],["|",false],["main",true],["path",false],["inter",false],["cusp",false],["smooth",false],["mid",false],["w",false],["oth",true],["rot",false],["cross",false],["txt",false],["w",false],["page",false],["grid",true],["guide",true]];
    return html`
      <svg width="0" height="0" style="position:absolute">
        <defs>
          <linearGradient id="gPage" x1="0" y1="0" x2="1" y2="1"><stop offset="0" stop-color="#fff"/><stop offset="1" stop-color="#d4d4d4"/></linearGradient>
          <linearGradient id="gTweak" x1="0" y1="0" x2="0" y2="1"><stop offset="0" stop-color="#555"/><stop offset=".55" stop-color="#777"/><stop offset="1" stop-color="#ddd"/></linearGradient>
          <radialGradient id="gBlue"><stop offset="0" stop-color="#f0f6fb"/><stop offset="1" stop-color="#bcd4e8"/></radialGradient>
          <linearGradient id="gBlue2" x1="0" y1="0" x2="0" y2="1"><stop offset="0" stop-color="#a8bbd4"/><stop offset="1" stop-color="#44558a"/></linearGradient>
          <linearGradient id="gBlue3" x1="0" y1="0" x2="1" y2="1"><stop offset="0" stop-color="#a8c4e0"/><stop offset="1" stop-color="#3a5e98"/></linearGradient>
          <linearGradient id="gPink" x1="0" y1="0" x2="1" y2="1"><stop offset="0" stop-color="#fff"/><stop offset="1" stop-color="#f4b4aa"/></linearGradient>
          <linearGradient id="gRect" x1="0" y1="0" x2="1" y2="1"><stop offset="0" stop-color="#eaf2f8"/><stop offset="1" stop-color="#a2bfda"/></linearGradient>
          <linearGradient id="gGreen" x1="0" y1="1" x2="1" y2="0"><stop offset="0" stop-color="#a8e0a8"/><stop offset=".5" stop-color="#c0d0c0"/><stop offset="1" stop-color="#38c038"/></linearGradient>
          <linearGradient id="gXml" x1="0" y1="0" x2="1" y2="1"><stop offset="0" stop-color="#fff"/><stop offset="1" stop-color="#888"/></linearGradient>
        </defs>
      </svg>
      <div class="stripe"></div>
      <div class="title">
        <svg class="logo" viewBox="0 0 18 20"><path d="M9 0L17 8L14 10L15 12L11 14L10 18L8 19L7 15L3 13L4 10L1 8Z" fill="#1c1c1c"/><path d="M9 3L12 7L9 10L6 7Z" fill="#8a8a8a"/><path d="M3 11h12" stroke="#fff" stroke-width=".6"/></svg>
        <span class="t">*新建文档 1 - Inkscape</span>
        <div class="wc">
          <div><svg width="12" height="12" viewBox="0 0 12 12"><path d="M0 6H12" stroke="#111" stroke-width="1"/></svg></div>
          <div><svg width="12" height="12" viewBox="0 0 12 12"><path d="M.5 2.5H9.5V11.5H.5ZM2.5 2.5V.5H11.5V9.5H9.5" fill="none" stroke="#111"/></svg></div>
          <div style="margin-right:-7px"><svg width="13" height="13" viewBox="0 0 13 13"><path d="M.5 .5L12.5 12.5M12.5 .5L.5 12.5" stroke="#111"/></svg></div>
        </div>
      </div>
      <div class="menu">${["文件(F)","编辑(E)","视图(V)","层(L)","对象(O)","路径(P)","文字(T)","滤镜(S)","扩展(N)","帮助(H)"].map((m) => html`<span>${m}</span>`)}</div>
      <div class="toolbar">
        ${tb("doc")}${tb("selAll")}${tb("selLay")}
        <div class="sep" style="margin:0 6px 0 8px"></div>
        ${tb("rotL")}${tb("rotR")}${tb("flipH")}${tb("flipV")}
        <div class="sep" style="margin:0 8px 0 7px"></div>
        ${tb("top")}${tb("up")}${tb("down")}${tb("bot")}
        <div class="sep" style="margin:0 0 0 6px"></div>
        <div class="lbl" style="width:35.5px">X:</div><div class="inp"></div>${spin}
        <div class="lbl" style="width:30px">Y:</div><div class="inp"></div>${spin}
        <div class="lbl" style="width:33px">宽:</div><div class="inp"></div>${spin}
        <div class="tb ico" style="width:32px">${this.ic(TB.lock)}</div>
        <div class="lbl" style="width:35px">高:</div><div class="inp" style="width:55px"></div>${spin}
        <div class="px">px</div>
        <div class="drop">${chev(CD, "#555", 1.4)}</div>
        <div class="sep" style="margin:0 8px 0 6px"></div>
        <div class="group">${["s1","s2","s3","s4"].map((n) => html`<div class="ico">${this.ic(TB[n])}</div>`)}</div>
      </div>
      <div class="main">
        <div class="tools">
          ${tools.map((t, i) => html`<div class="tool ico ${i === 0 ? "on" : ""}">${this.ic(TOOLS[t], 32, 34)}</div>`)}
        </div>
        <div class="center">
          ${this.topRuler()}
          <div class="corner11 ico">
            <svg width="24" height="24" viewBox="0 0 24 24"><circle cx="10" cy="10" r="8" fill="#f4f4f4" stroke="#666" stroke-width="1.8"/><text x="10" y="13" text-anchor="middle" font-size="8" font-family="Liberation Sans" fill="#555">1:1</text><path d="M16 16L22 22" stroke="#555" stroke-width="2.6"/></svg>
          </div>
          ${this.leftRuler()}
          <div class="canvas">
            <div class="pagel"></div>
            <div class="fab"><span class="k0">F</span><span>A</span><span class="k2">B</span><span class="k3"> L</span><span>A</span><span class="k4">B</span></div>
            <div class="guide"></div>
            <div class="sheet">
              <div class="hd">name</div><div class="hd">Default tool</div>
              ${ROWS.map(([a, b, n]) => html`<div class="cell">${a}</div><div class="cell ${n ? "num" : ""}">${b}</div>`)}
              <div class="glive"></div>
            </div>
          </div>
          <div class="vs">
            <div class="vthumb"></div>
            <span class="a">${chev(CU)}</span>
            <span class="b">${chev(CD)}</span>
          </div>
          <div class="hs">
            <div class="hthumb"></div>
            <span class="a">${chev(CL)}</span>
            <span class="b">${chev(CR)}</span>
          </div>
          <div class="cms ico">
            <svg width="18" height="20" viewBox="0 0 18 20"><path d="M6 1L16 16L10 18L2 17Z" fill="#8cb98c" stroke="#667"/><path d="M6 1L9 17L2 17Z" fill="#7fa0c8"/><path d="M9 10L16 16L10 18Z" fill="#a09080"/></svg>
          </div>
        </div>
        <div class="right">
          <div class="cmd">
            ${cmds.map((c) => c === "|" ? html`<div class="csep"></div>` : html`<div class="c ico">${this.ic(CMD[c], 24, 24)}</div>`)}
          </div>
          <div class="snap">
            ${snaps.map(([s, on]) => s === "|" ? html`<div class="ssep"></div>` : s === "w" ? html`<div class="ssep w"></div>` : html`<div class="s ico ${on ? "on" : ""}">${this.ic(SNAP[s], 32, 32)}</div>`)}
          </div>
          <div class="more">»</div>
        </div>
      </div>
      <div class="palette">
        <svg class="x" viewBox="0 0 23 25"><rect width="23" height="25" fill="#fff"/><path d="M0 0L23 25M23 0L0 25" stroke="#7a2a1a" stroke-width="1.6"/><rect x=".5" y=".5" width="22" height="24" fill="none" stroke="#444"/></svg>
        <div class="sw">${SWATCHES.map((c) => html`<i style="background:${c}"></i>`)}</div>
        <i class="pm"></i>
      </div>
      <div class="pscroll">
        <div class="pthumb"></div>
        <span style="position:relative">${chev(CL, "#bbb")}</span>
        <span>${chev(CR)}</span>
      </div>
      <div class="status">
        <div class="fs">
          <span>填充:</span><span>不可用</span>
          <div class="o"><b>O:</b><div class="oi">100</div>${spin}</div>
          <span>轮廓:</span><span>不可用</span>
        </div>
        <div class="vsep"></div>
        <div class="tb ico" style="width:30px;height:40px;margin-left:2px">${this.ic(TB.eye, 20, 24)}</div>
        <div class="tb ico" style="width:26px;height:40px">${this.ic(TB.lock, 18, 24)}</div>
        <div class="ly">•Layer 1</div>
        <div class="ld">${chev(CD, "#555", 1.4)}</div>
        <div class="msg"><b>Alt:</b> click to select under; scroll mouse-wheel to cycle-select; drag to move selected or select by touch</div>
        <div class="vsep"></div>
        <div class="coords"><span>X:</span><span>505.65</span><span>Y:</span><span>217.74</span></div>
        <div class="z">Z:</div>
        <div class="zi">124%</div>
        <div class="zs"><i class="up"></i><i class="dn"></i></div>
      </div>
    `;
  }
}
